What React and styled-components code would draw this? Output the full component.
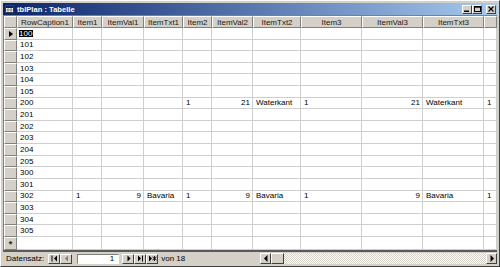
import React from 'react';
import styled, { createGlobalStyle } from 'styled-components';

const GlobalStyle = createGlobalStyle`
  html, body {
    margin: 0;
    padding: 0;
    background: #d4d0c8;
  }
  body {
    font-family: "Liberation Sans", Arial, sans-serif;
    font-size: 8px;
  }
`;

const columns = [
  { name: 'RowCaption1', w: '56px' },
  { name: 'Item1', w: '29px' },
  { name: 'ItemVal1', w: '42px', right: true },
  { name: 'ItemTxt1', w: '39px' },
  { name: 'Item2', w: '29px' },
  { name: 'ItemVal2', w: '41px', right: true },
  { name: 'ItemTxt2', w: '48px' },
  { name: 'Item3', w: '61px' },
  { name: 'ItemVal3', w: '61px', right: true },
  { name: 'ItemTxt3', w: '61px' },
  { name: '', w: '1fr' }
];

const captions = [
  '100', '101', '102', '103', '104', '105',
  '200', '201', '202', '203', '204', '205',
  '300', '301', '302', '303', '304', '305'
];

const filled = {
  200: ['', '', '', '1', '21', 'Waterkant', '1', '21', 'Waterkant', '1'],
  302: ['1', '9', 'Bavaria', '1', '9', 'Bavaria', '1', '9', 'Bavaria', '1']
};

const template = '13px ' + columns.map((c) => c.w).join(' ');

function TableIcon() {
  return (
    <svg width="9" height="8" viewBox="0 0 9 8">
      <rect x="0.5" y="0.5" width="8" height="7" fill="#fff" stroke="#404040" />
      <rect x="1" y="1" width="7" height="2" fill="#0a246a" />
      <path d="M3 3v4M6 3v4M1 5h7" stroke="#808080" strokeWidth="1" />
    </svg>
  );
}

function NavIcon({ kind, disabled }) {
  const fill = disabled ? '#808080' : '#000';
  return (
    <svg width="9" height="7" viewBox="0 0 9 7">
      {kind === 'first' && (
        <>
          <rect x="1.5" y="0.5" width="1" height="6" fill={fill} />
          <polygon points="7,0.5 7,6.5 4,3.5" fill={fill} />
        </>
      )}
      {kind === 'prev' && <polygon points="6,0.5 6,6.5 3,3.5" fill={fill} />}
      {kind === 'next' && <polygon points="3.5,0.5 3.5,6.5 6.5,3.5" fill={fill} />}
      {kind === 'last' && (
        <>
          <polygon points="2,0.5 2,6.5 5,3.5" fill={fill} />
          <rect x="6" y="0.5" width="1" height="6" fill={fill} />
        </>
      )}
      {kind === 'new' && (
        <>
          <polygon points="1,0.5 1,6.5 4,3.5" fill={fill} />
          <path d="M6.5 1v5M4.5 2l4 3M8.5 2l-4 3" stroke={fill} strokeWidth="0.9" />
        </>
      )}
    </svg>
  );
}

function App() {
  return (
    <>
      <GlobalStyle />
      <Window>
        <TitleBar>
          <TableIcon />
          <TitleText>tblPlan : Tabelle</TitleText>
          <CaptionButtons>
            <CaptionButton>
              <svg width="6" height="6" viewBox="0 0 6 6">
                <rect x="0" y="4.5" width="5" height="1.5" fill="#000" />
              </svg>
            </CaptionButton>
            <CaptionButton>
              <svg width="7" height="6" viewBox="0 0 7 6">
                <rect x="0.5" y="0.5" width="6" height="5" fill="none" stroke="#000" />
                <rect x="0.5" y="0.5" width="6" height="1.2" fill="#000" />
              </svg>
            </CaptionButton>
            <CaptionButton $gap>
              <svg width="6" height="6" viewBox="0 0 6 6">
                <path d="M0.5 0.5l5 5M5.5 0.5l-5 5" stroke="#000" strokeWidth="1.2" />
              </svg>
            </CaptionButton>
          </CaptionButtons>
        </TitleBar>

        <Sheet $template={template}>
          <Selector />
          {columns.map((c, i) => (
            <HeaderCell key={i}>{c.name}</HeaderCell>
          ))}

          {captions.map((cap, r) => {
            const vals = filled[cap] || [];
            return (
              <React.Fragment key={cap}>
                <Selector>{r === 0 && <Pointer />}</Selector>
                <Cell>{r === 0 ? <Selected>{cap}</Selected> : cap}</Cell>
                {columns.slice(1).map((c, i) => (
                  <Cell key={i} $right={c.right}>
                    {vals[i] || ''}
                  </Cell>
                ))}
              </React.Fragment>
            );
          })}

          <Selector>
            <Star>*</Star>
          </Selector>
          {columns.map((c, i) => (
            <Cell key={i} />
          ))}
        </Sheet>

        <NavBar>
          <NavLabel>Datensatz:</NavLabel>
          <NavButton><NavIcon kind="first" /></NavButton>
          <NavButton><NavIcon kind="prev" disabled /></NavButton>
          <RecordBox>1</RecordBox>
          <NavButton><NavIcon kind="next" /></NavButton>
          <NavButton><NavIcon kind="last" /></NavButton>
          <NavButton><NavIcon kind="new" /></NavButton>
          <NavLabel $left>von 18</NavLabel>
          <HScroll>
            <ScrollButton>
              <svg width="4" height="7" viewBox="0 0 4 7">
                <polygon points="3.5,0 3.5,7 0,3.5" fill="#000" />
              </svg>
            </ScrollButton>
            <Thumb />
            <Track />
            <ScrollButton>
              <svg width="4" height="7" viewBox="0 0 4 7">
                <polygon points="0.5,0 0.5,7 4,3.5" fill="#000" />
              </svg>
            </ScrollButton>
          </HScroll>
        </NavBar>
      </Window>
    </>
  );
}

export default App;

const Window = styled.div`
  box-sizing: border-box;
  width: 500px;
  height: 267px;
  display: flex;
  flex-direction: column;
  padding: 2px;
  background: #d4d0c8;
  border-top: 1px solid #ffffff;
  border-left: 1px solid #ffffff;
  border-right: 1px solid #404040;
  border-bottom: 1px solid #404040;
  overflow: hidden;
`;

const TitleBar = styled.div`
  flex: 0 0 12px;
  display: flex;
  align-items: center;
  gap: 3px;
  padding-left: 2px;
  background: linear-gradient(to right, #0a246a, #a6caf0);
  color: #ffffff;
`;

const TitleText = styled.span`
  font-weight: bold;
  font-size: 7.6px;
  white-space: nowrap;
`;

const CaptionButtons = styled.div`
  margin-left: auto;
  display: flex;
  align-items: center;
  padding-right: 1px;
`;

const CaptionButton = styled.div`
  box-sizing: border-box;
  width: 10px;
  height: 9px;
  margin-left: ${(p) => (p.$gap ? '4px' : '0')};
  display: flex;
  align-items: center;
  justify-content: center;
  background: #d4d0c8;
  border: 1px solid;
  border-color: #ffffff #404040 #404040 #ffffff;
`;

const Sheet = styled.div`
  flex: 1;
  display: grid;
  grid-template-columns: ${(p) => p.$template};
  grid-template-rows: 12px repeat(19, 1fr);
  background: #ffffff;
  border-top: 1px solid #808080;
  border-left: 1px solid #808080;
  overflow: hidden;
`;

const HeaderCell = styled.div`
  box-sizing: border-box;
  display: flex;
  align-items: center;
  justify-content: center;
  background: #d4d0c8;
  border-top: 1px solid #ffffff;
  border-left: 1px solid #ffffff;
  border-right: 1px solid #808080;
  border-bottom: 1px solid #808080;
  color: #1a1a1a;
  white-space: nowrap;
  overflow: hidden;
`;

const Selector = styled.div`
  box-sizing: border-box;
  display: flex;
  align-items: center;
  justify-content: center;
  background: #d4d0c8;
  border-top: 1px solid #ffffff;
  border-left: 1px solid #ffffff;
  border-right: 1px solid #808080;
  border-bottom: 1px solid #808080;
`;

const Pointer = styled.span`
  width: 0;
  height: 0;
  border-top: 3.5px solid transparent;
  border-bottom: 3.5px solid transparent;
  border-left: 4px solid #000;
`;

const Star = styled.span`
  font-size: 9px;
  font-weight: bold;
  line-height: 1;
  margin-top: 2px;
  color: #202020;
`;

const Cell = styled.div`
  box-sizing: border-box;
  display: flex;
  align-items: center;
  justify-content: ${(p) => (p.$right ? 'flex-end' : 'flex-start')};
  padding: 0 2px 0 3px;
  border-right: 1px solid #cfcfcf;
  border-bottom: 1px solid #cfcfcf;
  color: #000;
  white-space: nowrap;
  overflow: hidden;
`;

const Selected = styled.span`
  background: #000;
  color: #fff;
  line-height: 7px;
  padding: 0 1px 0 0;
  margin-left: -1px;
`;

const NavBar = styled.div`
  flex: 0 0 11px;
  display: flex;
  align-items: center;
  border-top: 2px solid #5a5a5a;
  padding: 1px 0 0 3px;
`;

const NavLabel = styled.span`
  margin-right: ${(p) => (p.$left ? '0' : '4px')};
  margin-left: ${(p) => (p.$left ? '3px' : '0')};
  color: #000;
  white-space: nowrap;
  width: ${(p) => (p.$left ? '99px' : 'auto')};
`;

const NavButton = styled.div`
  box-sizing: border-box;
  width: 12px;
  height: 10px;
  display: flex;
  align-items: center;
  justify-content: center;
  background: #d4d0c8;
  border: 1px solid;
  border-color: #ffffff #404040 #404040 #ffffff;
`;

const RecordBox = styled.div`
  box-sizing: border-box;
  width: 42px;
  height: 10px;
  margin: 0 3px 0 5px;
  display: flex;
  align-items: center;
  justify-content: flex-end;
  padding-right: 4px;
  background: #ffffff;
  border: 1px solid;
  border-color: #808080 #ffffff #ffffff #808080;
  color: #000;
`;

const HScroll = styled.div`
  flex: 1;
  display: flex;
  height: 11px;
`;

const ScrollButton = styled.div`
  box-sizing: border-box;
  width: 11px;
  height: 11px;
  display: flex;
  align-items: center;
  justify-content: center;
  background: #d4d0c8;
  border: 1px solid;
  border-color: #ffffff #404040 #404040 #ffffff;
`;

const Thumb = styled.div`
  box-sizing: border-box;
  width: 13px;
  height: 11px;
  background: #d4d0c8;
  border: 1px solid;
  border-color: #ffffff #404040 #404040 #ffffff;
`;

const Track = styled.div`
  flex: 1;
  background: repeating-conic-gradient(#d4d0c8 0 25%, #ffffff 0 50%) 0 0 / 2px 2px;
`;
